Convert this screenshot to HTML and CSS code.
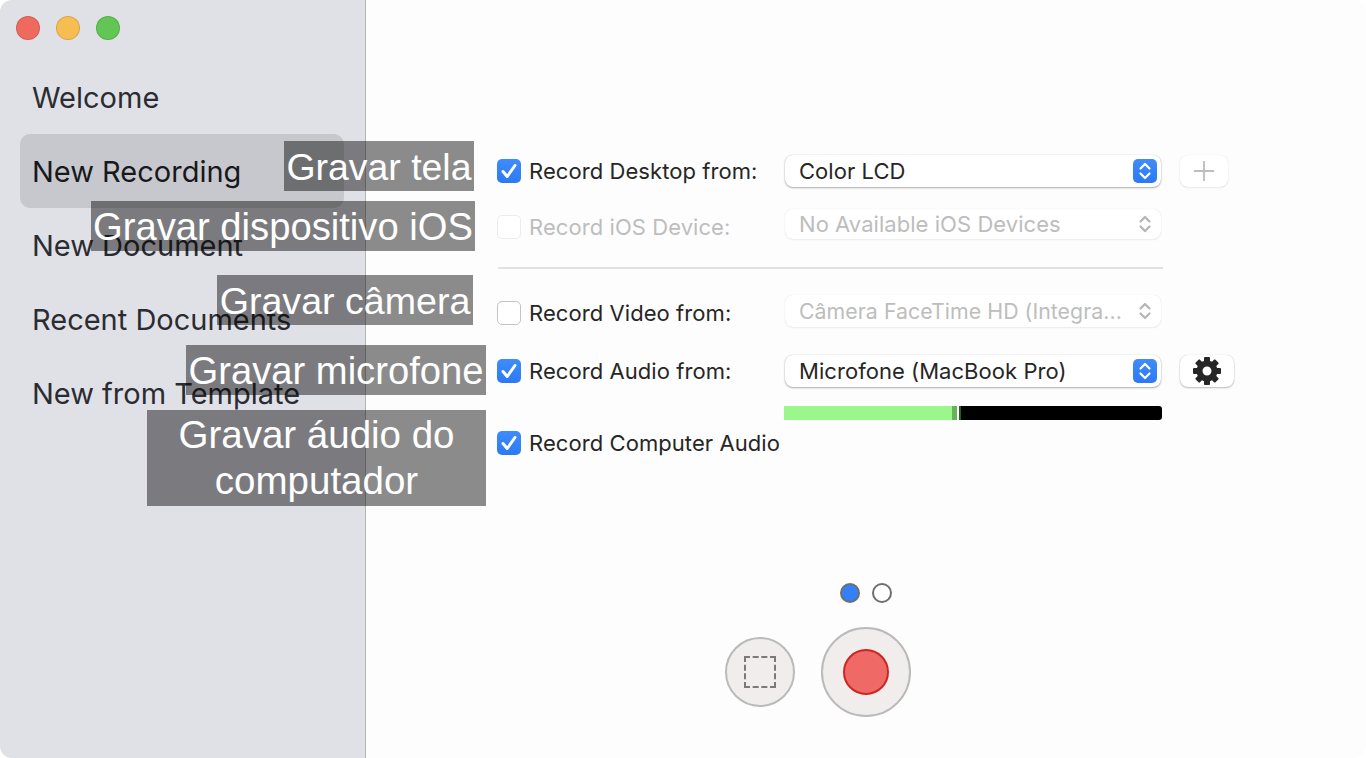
FILE: index.html
```html
<!DOCTYPE html>
<html lang="en">
<head>
  <meta charset="UTF-8" />
  <title>New Recording</title>
  <link rel="stylesheet" href="styles.css">
</head>
<body>
  <div class="window">
    <aside class="sidebar">
      <div class="traffic">
        <span class="light red"></span>
        <span class="light yellow"></span>
        <span class="light green"></span>
      </div>
      <nav class="nav">
        <a class="nav-item">Welcome</a>
        <a class="nav-item active">New Recording</a>
        <a class="nav-item">New Document</a>
        <a class="nav-item">Recent Documents</a>
        <a class="nav-item">New from Template</a>
      </nav>
    </aside>

    <main class="main">
      <form class="form">
        <div class="row row-desktop">
          <span class="check on">
            <svg viewBox="0 0 24 24"><path d="M6 12.500l4.200 5L18 6.500" /></svg>
          </span>
          <label class="row-label">Record Desktop from:</label>
          <div class="select">
            <span class="select-text">Color LCD</span>
            <span class="stepper on">
              <svg viewBox="0 0 24 24"><path d="M7.500 9.500L12 5l4.500 4.500M7.500 14.500L12 19l4.500-4.500" /></svg>
            </span>
          </div>
          <button type="button" class="side-btn plus" disabled>
            <svg viewBox="0 0 24 24"><path d="M12 1v22M1 12h22" /></svg>
          </button>
        </div>

        <div class="row row-ios disabled">
          <span class="check"></span>
          <label class="row-label">Record iOS Device:</label>
          <div class="select">
            <span class="select-text">No Available iOS Devices</span>
            <span class="stepper">
              <svg viewBox="0 0 24 24"><path d="M7.500 9.500L12 5l4.500 4.500M7.500 14.500L12 19l4.500-4.500" /></svg>
            </span>
          </div>
        </div>

        <hr class="divider">

        <div class="row row-video">
          <span class="check plain"></span>
          <label class="row-label">Record Video from:</label>
          <div class="select off">
            <span class="select-text">Câmera FaceTime HD (Integra...</span>
            <span class="stepper">
              <svg viewBox="0 0 24 24"><path d="M7.500 9.500L12 5l4.500 4.500M7.500 14.500L12 19l4.500-4.500" /></svg>
            </span>
          </div>
        </div>

        <div class="row row-audio">
          <span class="check on">
            <svg viewBox="0 0 24 24"><path d="M6 12.500l4.200 5L18 6.500" /></svg>
          </span>
          <label class="row-label">Record Audio from:</label>
          <div class="select">
            <span class="select-text">Microfone (MacBook Pro)</span>
            <span class="stepper on">
              <svg viewBox="0 0 24 24"><path d="M7.500 9.500L12 5l4.500 4.500M7.500 14.500L12 19l4.500-4.500" /></svg>
            </span>
          </div>
          <button type="button" class="side-btn gear">
            <svg viewBox="0 0 28 28">
              <g class="teeth">
                <rect x="11" y="0" width="6" height="28" rx="1" />
                <rect x="11" y="0" width="6" height="28" rx="1" transform="rotate(45 14 14)" />
                <rect x="11" y="0" width="6" height="28" rx="1" transform="rotate(90 14 14)" />
                <rect x="11" y="0" width="6" height="28" rx="1" transform="rotate(135 14 14)" />
              </g>
              <circle class="gear-body" cx="14" cy="14" r="7.500" />
            </svg>
          </button>
        </div>

        <div class="meter">
          <span class="meter-level"></span>
          <span class="meter-peak"></span>
          <span class="meter-gap"></span>
          <span class="meter-tick"></span>
        </div>

        <div class="row row-computer">
          <span class="check on">
            <svg viewBox="0 0 24 24"><path d="M6 12.500l4.200 5L18 6.500" /></svg>
          </span>
          <label class="row-label wide">Record Computer Audio</label>
        </div>
      </form>

      <div class="pager">
        <span class="dot current"></span>
        <span class="dot"></span>
      </div>

      <div class="actions">
        <button type="button" class="round small"><span class="dashed"></span></button>
        <button type="button" class="round big"><span class="rec"></span></button>
      </div>
    </main>

    <!-- legendas em cima da janela -->
    <div class="caption cap-tela">Gravar tela</div>
    <div class="caption cap-ios">Gravar dispositivo iOS</div>
    <div class="caption cap-camera">Gravar câmera</div>
    <div class="caption cap-mic">Gravar microfone</div>
    <div class="caption cap-audio">Gravar áudio do computador</div>
  </div>
</body>
</html>
```

FILE: styles.css
```css
html, body {
  margin: 0;
  height: 100%;
  background: #fff;
}
body {
  font-family: Inter, "Noto Sans", sans-serif;
  overflow: hidden;
}
.window {
  position: relative;
  display: flex;
  height: 758px;
  background: #fdfdfd;
  border-radius: 12px;
  overflow: hidden;
}

/* sidebar */
.sidebar {
  width: 365px;
  flex: none;
  background: #e0e1e7;
  border-right: 1px solid #b3b3b6;
}
.traffic {
  display: flex;
  gap: 16px;
  padding: 16px 0 0 16px;
}
.light {
  width: 24px;
  height: 24px;
  border-radius: 50%;
  box-sizing: border-box;
  border: 1px solid rgba(0,0,0,0.12);
}
.red { background: #ee6a5f; }
.yellow { background: #f6bd50; }
.green { background: #61c654; }
.nav {
  display: flex;
  flex-direction: column;
  padding: 20px 21px 0 20px;
}
.nav-item {
  height: 74px;
  line-height: 76px;
  padding-left: 12px;
  font-size: 29px;
  color: #2b2c31;
  border-radius: 10px;
  white-space: nowrap;
}
.nav-item.active {
  background: #c7c8cd;
  color: #17181c;
}

/* form */
.main {
  flex: 1;
  display: flex;
  flex-direction: column;
  padding-top: 155px;
}
.form {
  padding-left: 131px;
}
.row {
  display: grid;
  grid-template-columns: 24px 264px 376px auto;
  align-items: center;
  justify-content: start;
}
.row-label {
  padding-left: 8px;
  font-size: 22px;
  letter-spacing: 0.07px;
  color: #262626;
  white-space: nowrap;
}
.row-label.wide {
  grid-column: 2 / 4;
}
.check {
  width: 24px;
  height: 24px;
  box-sizing: border-box;
  border-radius: 5px;
  background: #fff;
  border: 1px solid #ececec;
}
.check.plain {
  border-color: #c4c4c4;
}
.check.on {
  border: none;
  background: linear-gradient(#3f8cfb, #2d79f5);
}
.check svg {
  display: block;
  width: 24px;
  height: 24px;
}
.check path {
  fill: none;
  stroke: #fff;
  stroke-width: 3;
  stroke-linecap: round;
  stroke-linejoin: round;
}
.select {
  display: flex;
  align-items: center;
  justify-content: space-between;
  height: 32px;
  box-sizing: border-box;
  padding: 0 4px 0 14px;
  background: #fff;
  border-radius: 8px;
  box-shadow: 0 0 1px rgba(0,0,0,0.25), 0 1px 2px rgba(0,0,0,0.3);
  font-size: 22px;
  letter-spacing: 0.05px;
  color: #262626;
  white-space: nowrap;
}
.stepper {
  width: 24px;
  height: 24px;
  border-radius: 5px;
}
.stepper.on {
  background: linear-gradient(#3f8cfb, #2d79f5);
}
.stepper svg {
  display: block;
  width: 24px;
  height: 24px;
}
.stepper path {
  fill: none;
  stroke: #b4b4b4;
  stroke-width: 2.2;
  stroke-linecap: round;
  stroke-linejoin: round;
}
.stepper.on path {
  stroke: #fff;
}
.side-btn {
  width: 48px;
  height: 32px;
  margin-left: 19px;
  padding: 0;
  display: flex;
  align-items: center;
  justify-content: center;
  border: none;
  border-radius: 8px;
  background: #fff;
  box-shadow: 0 0 1px rgba(0,0,0,0.15), 0 1px 2px rgba(0,0,0,0.08);
}
.plus svg {
  width: 22px;
  height: 22px;
}
.plus path {
  fill: none;
  stroke: #bdbdbd;
  stroke-width: 2;
}
.gear {
  width: 54px;
  box-shadow: 0 0 1px rgba(0,0,0,0.2), 0 1px 2px rgba(0,0,0,0.25);
}
.gear svg {
  width: 28px;
  height: 28px;
}
.teeth rect {
  fill: #262626;
}
.gear-body {
  fill: #fff;
  stroke: #262626;
  stroke-width: 6;
}

.row-ios {
  margin-top: 22px;
}
.row-ios .select {
  height: 30px;
}
.row-ios .check,
.row-ios .row-label {
  position: relative;
  top: 3px;
}
.disabled .row-label,
.off .select-text,
.disabled .select-text {
  color: #bdbdbd;
}
.disabled .select,
.off {
  box-shadow: 0 0 1px rgba(0,0,0,0.15), 0 1px 2px rgba(0,0,0,0.06);
}
.off {
  font-size: 21.3px;
}
.divider {
  width: 665px;
  height: 2px;
  margin: 28px 0 26px 1px;
  border: none;
  background: #e2e2e2;
}
.row-video .check,
.row-video .row-label {
  position: relative;
  top: 2px;
}
.row-audio {
  margin-top: 28px;
}
.meter {
  display: flex;
  width: 378px;
  height: 14px;
  margin: 19px 0 0 287px;
  background: #000;
  border-radius: 0 3px 3px 0;
}
.meter-level {
  width: 168px;
  background: #9bf78b;
}
.meter-peak {
  width: 5px;
  background: #67b35c;
}
.meter-gap {
  width: 2px;
  background: #fff;
}
.meter-tick {
  width: 2px;
  background: #2c5a27;
}
.row-computer {
  margin-top: 10px;
}

/* bottom */
.pager {
  display: flex;
  justify-content: center;
  gap: 12px;
  margin-top: 127px;
}
.dot {
  width: 20px;
  height: 20px;
  box-sizing: border-box;
  border-radius: 50%;
  border: 2px solid #6e6e6e;
  background: #fff;
}
.dot.current {
  background: #3380f8;
}
.actions {
  display: grid;
  grid-template-columns: 1fr auto 1fr;
  align-items: center;
  column-gap: 26px;
  margin-top: 24px;
}
.round {
  display: flex;
  align-items: center;
  justify-content: center;
  padding: 0;
  box-sizing: border-box;
  border-radius: 50%;
  border: 2px solid #bababa;
  background: #f1eded;
}
.small {
  width: 70px;
  height: 70px;
  justify-self: end;
}
.big {
  width: 90px;
  height: 90px;
}
.dashed {
  width: 32px;
  height: 32px;
  box-sizing: border-box;
  border: 2px dashed #7a7a7a;
}
.rec {
  width: 46px;
  height: 46px;
  box-sizing: border-box;
  border-radius: 50%;
  border: 2px solid #c9271f;
  background: #ef6a66;
}

/* captions */
.caption {
  position: absolute;
  display: flex;
  align-items: center;
  justify-content: center;
  text-align: center;
  box-sizing: border-box;
  height: 50px;
  padding-top: 2px;
  background: rgba(0,0,0,0.45);
  color: #fff;
  font-family: "Liberation Sans", Arial, sans-serif;
  font-size: 38px;
  line-height: 46px;
  white-space: nowrap;
}
.cap-tela { left: 284px; top: 141px; width: 190px; font-size: 37.400px; }
.cap-ios { left: 91px; top: 201px; width: 384px; font-size: 38.200px; }
.cap-camera { left: 217px; top: 275px; width: 256px; font-size: 37.600px; }
.cap-mic { left: 186px; top: 345px; width: 300px; font-size: 38.200px; }
.cap-audio { left: 147px; top: 410px; width: 339px; height: 96px; padding: 0 20px; font-size: 38.500px; white-space: normal; }
```
